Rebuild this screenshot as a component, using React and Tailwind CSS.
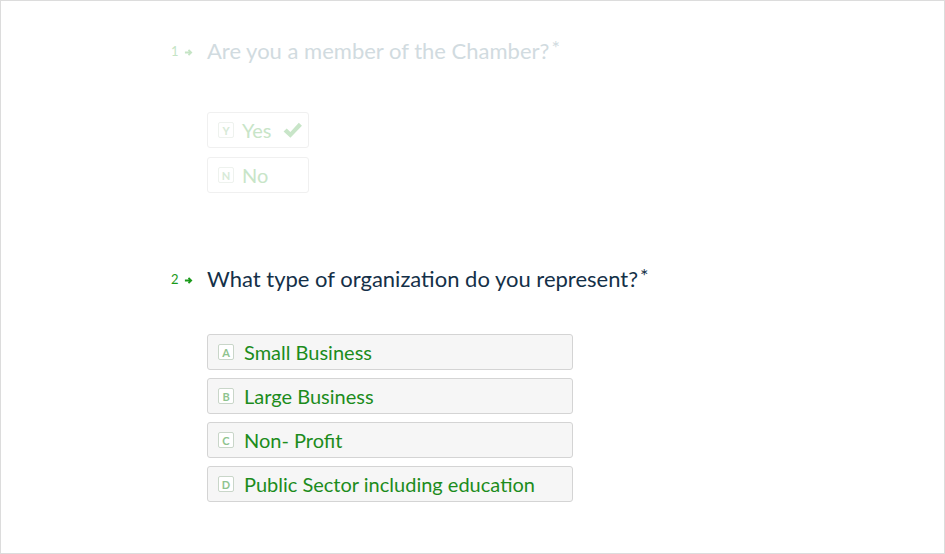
const options = [
  { key: 'A', label: 'Small Business' },
  { key: 'B', label: 'Large Business' },
  { key: 'C', label: 'Non- Profit' },
  { key: 'D', label: 'Public Sector including education' },
]

function Arrow({ className }) {
  return (
    <svg viewBox="0 0 10 10" className={className} fill="none" stroke="currentColor" strokeWidth="2">
      <path d="M1 5h7M5 2l3 3-3 3" />
    </svg>
  )
}

function KeyBox({ k, faded }) {
  return (
    <span
      className={`w-4 h-4 flex items-center justify-center rounded-[2px] border text-[11px] font-bold leading-none ${
        faded ? 'border-[#eef2ee] text-[#d7ead7] bg-white' : 'border-[#c9d6c9] text-[#8fc48f] bg-white'
      }`}
    >
      {k}
    </span>
  )
}

export default function App() {
  return (
    <div className="w-[945px] h-[554px] border border-[#dcdcdc] bg-white overflow-hidden" style={{ fontFamily: 'Lato, "Open Sans", sans-serif' }}>
      <div className="pl-[168px] pt-[33px]">
        <div className="flex items-center h-[32px]">
          <span className="w-[38px] mt-[4px] flex items-center gap-[5px] text-[13px] text-[#c5e4c5]">
            <span className="pl-[2px]">1</span>
            <Arrow className="w-[9px] h-[9px]" />
          </span>
          <span className="text-[22px] text-[#d1dbe0]">Are you a member of the Chamber?</span>
          <span className="text-[20px] text-[#d1dbe0] self-start -mt-[2px] ml-[2px]">*</span>
        </div>
        <div className="ml-[38px] mt-[46px] flex flex-col gap-[9px]">
          <div className="w-[102px] h-[36px] border border-[#f0f0f0] rounded-[3px] flex items-center pl-[10px] gap-[8px]">
            <KeyBox k="Y" faded />
            <span className="text-[20px] text-[#c8e5c8]">Yes</span>
            <svg viewBox="0 0 20 20" className="w-[21px] h-[21px] ml-[2px] text-[#c8e5c8]" fill="currentColor">
              <path d="M1.5 11l3-3 3.5 3.5L16 2.5l3 3L8 17z" />
            </svg>
          </div>
          <div className="w-[102px] h-[36px] border border-[#f0f0f0] rounded-[3px] flex items-center pl-[10px] gap-[8px]">
            <KeyBox k="N" faded />
            <span className="text-[20px] text-[#c8e5c8]">No</span>
          </div>
        </div>

        <div className="flex items-center h-[32px] mt-[69px]">
          <span className="w-[38px] mt-[4px] flex items-center gap-[5px] text-[13px] text-[#1a9a1a]">
            <span className="pl-[2px]">2</span>
            <Arrow className="w-[9px] h-[9px]" />
          </span>
          <span className="text-[22px] text-[#143048]">What type of organization do you represent?</span>
          <span className="text-[20px] text-[#143048] self-start -mt-[2px] ml-[2px]">*</span>
        </div>
        <div className="ml-[38px] mt-[40px] flex flex-col gap-[8px]">
          {options.map((o) => (
            <div
              key={o.key}
              className="w-[366px] h-[36px] bg-[#f6f6f6] border border-[#d4d4d4] rounded-[3px] flex items-center pl-[10px] gap-[10px]"
            >
              <KeyBox k={o.key} />
              <span className="text-[20px] text-[#1c8c1c]">{o.label}</span>
            </div>
          ))}
        </div>
      </div>
    </div>
  )
}
